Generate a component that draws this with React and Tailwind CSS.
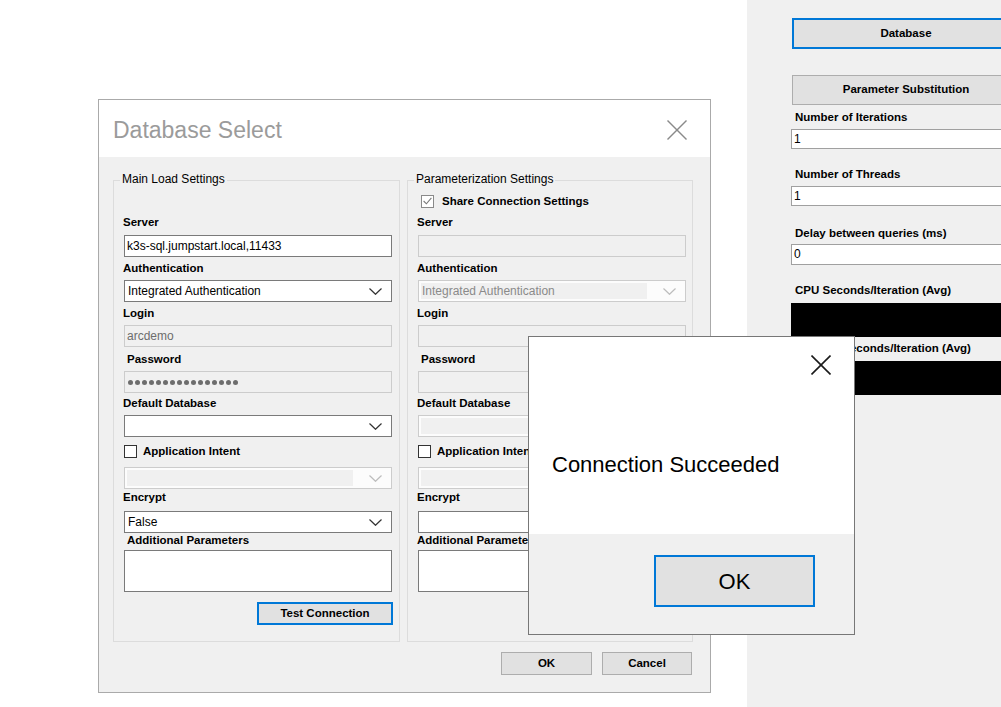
import React from 'react';

const Chevron = ({ light }) => (
  <svg width="13" height="7" viewBox="0 0 13 7">
    <polyline points="0.5,0.5 6.5,6.3 12.5,0.5" fill="none" stroke={light ? '#bdbdbd' : '#333'} strokeWidth="1.2" />
  </svg>
);

const XIcon = ({ size, color, width }) => (
  <svg width={size} height={size} viewBox={`0 0 ${size} ${size}`}>
    <line x1="0.5" y1="0.5" x2={size - 0.5} y2={size - 0.5} stroke={color} strokeWidth={width} />
    <line x1={size - 0.5} y1="0.5" x2="0.5" y2={size - 0.5} stroke={color} strokeWidth={width} />
  </svg>
);

const Label = ({ children, indent, className = '' }) => (
  <div className={`${indent ? 'pl-[3px]' : '-ml-px'} h-[14px] leading-[14px] text-[11.5px] font-bold text-black whitespace-nowrap ${className}`}>
    {children}
  </div>
);

const TextBox = ({ value, disabled, className = '' }) => (
  <div
    className={
      disabled
        ? `h-[22px] border border-[#cccccc] bg-[#f0f0f0] px-[2px] text-[12px] leading-[20px] text-[#6d6d6d] ${className}`
        : `h-[22px] border border-[#7a7a7a] bg-white px-[2px] text-[12px] leading-[20px] text-black ${className}`
    }
  >
    {value}
  </div>
);

const Combo = ({ value, disabled, className = '' }) => (
  <div
    className={
      disabled
        ? `h-[22px] border border-[#cccccc] bg-[#fcfcfc] flex ${className}`
        : `h-[22px] border border-[#7a7a7a] bg-white flex ${className}`
    }
  >
    <div
      className={
        disabled
          ? 'flex-1 m-[2px] bg-[#f0f0f0] px-px text-[12px] leading-[16px] text-[#8a8a8a] whitespace-nowrap overflow-hidden'
          : 'flex-1 m-[2px] px-px text-[12px] leading-[16px] text-black whitespace-nowrap overflow-hidden'
      }
    >
      {value}
    </div>
    <div className="w-[36px] pl-[4px] flex items-center justify-center">
      <Chevron light={disabled} />
    </div>
  </div>
);

const Check = ({ checked, label, className = '' }) => (
  <div className={`flex items-center h-[14px] ${className}`}>
    <div
      className={
        checked
          ? 'w-[13px] h-[13px] border border-[#8a8a8a] bg-white flex items-center justify-center mr-[8px]'
          : 'w-[13px] h-[13px] border border-[#333333] bg-white mr-[6px]'
      }
    >
      {checked && (
        <svg width="9" height="8" viewBox="0 0 9 8">
          <polyline points="0.6,4 3.4,6.8 8.4,0.8" fill="none" stroke="#7a7a7a" strokeWidth="1.1" />
        </svg>
      )}
    </div>
    <span className="text-[11.5px] font-bold leading-[14px] whitespace-nowrap">{label}</span>
  </div>
);

const WinButton = ({ children, focused, className = '' }) => (
  <div
    className={
      focused
        ? `border-2 border-[#0078d7] bg-[#e1e1e1] flex items-center justify-center font-bold text-[11.5px] ${className}`
        : `border border-[#adadad] bg-[#e1e1e1] flex items-center justify-center font-bold text-[11.5px] ${className}`
    }
  >
    {children}
  </div>
);

const Dots = () => (
  <div className="h-[22px] border border-[#cccccc] bg-[#f0f0f0] flex items-center gap-[2px] pl-[3px]">
    {Array.from({ length: 16 }).map((_, i) => (
      <div key={i} className="w-[5px] h-[5px] rounded-full bg-[#6d6d6d]" />
    ))}
  </div>
);

const GroupBox = ({ title, children, className = '' }) => (
  <div className={`relative border border-[#dcdcdc] h-[462px] flex flex-col ${className}`}>
    <div className="absolute left-[6px] -top-[9px] px-[2px] bg-[#f0f0f0] text-[12px] leading-[14px] text-black whitespace-nowrap">
      {title}
    </div>
    {children}
  </div>
);

const MainFields = () => (
  <GroupBox title="Main Load Settings" className="w-[287px] pl-[10px] pr-[7px]">
    <Label className="mt-[34px]">Server</Label>
    <TextBox className="mt-[6px]" value="k3s-sql.jumpstart.local,11433" />
    <Label className="mt-[4px]">Authentication</Label>
    <Combo className="mt-[5px]" value="Integrated Authentication" />
    <Label className="mt-[4px]">Login</Label>
    <TextBox className="mt-[5px]" value="arcdemo" disabled />
    <Label className="mt-[5px]" indent>Password</Label>
    <div className="mt-[5px]">
      <Dots />
    </div>
    <Label className="mt-[3px]">Default Database</Label>
    <Combo className="mt-[5px]" value="" />
    <Check className="mt-[7px]" label="Application Intent" />
    <Combo className="mt-[9px]" value="" disabled />
    <Label className="mt-px">Encrypt</Label>
    <Combo className="mt-[7px]" value="False" />
    <Label className="mt-0" indent>Additional Parameters</Label>
    <div className="mt-[3px] h-[42px] border border-[#7a7a7a] bg-white" />
    <div className="mt-[10px] flex justify-end -mr-px">
      <WinButton focused className="w-[136px] h-[23px]">Test Connection</WinButton>
    </div>
  </GroupBox>
);

const ParamFields = () => (
  <GroupBox title="Parameterization Settings" className="w-[286px] pl-[10px] pr-[6px]">
    <Check className="mt-[13px] ml-[3px]" checked label="Share Connection Settings" />
    <Label className="mt-[7px]">Server</Label>
    <TextBox className="mt-[6px]" value="" disabled />
    <Label className="mt-[4px]">Authentication</Label>
    <Combo className="mt-[5px]" value="Integrated Authentication" disabled />
    <Label className="mt-[4px]">Login</Label>
    <TextBox className="mt-[5px]" value="" disabled />
    <Label className="mt-[5px]" indent>Password</Label>
    <TextBox className="mt-[5px]" value="" disabled />
    <Label className="mt-[3px]">Default Database</Label>
    <Combo className="mt-[5px]" value="" disabled />
    <Check className="mt-[7px]" label="Application Intent" />
    <Combo className="mt-[9px]" value="" disabled />
    <Label className="mt-px">Encrypt</Label>
    <Combo className="mt-[7px]" value="" />
    <Label className="mt-0">Additional Parameters</Label>
    <div className="mt-[3px] h-[42px] border border-[#7a7a7a] bg-white" />
  </GroupBox>
);

const SidePanel = () => (
  <div className="w-[254px] h-full bg-[#f0f0f0] overflow-hidden pl-[45px] pt-[18px] flex flex-col">
    <WinButton focused className="w-[228px] h-[31px] shrink-0">Database</WinButton>
    <WinButton className="w-[228px] h-[30px] mt-[26px] shrink-0">Parameter Substitution</WinButton>

    <div className="mt-[5px] pl-[3px] h-[14px] leading-[14px] text-[11.5px] font-bold whitespace-nowrap">Number of Iterations</div>
    <div className="mt-[5px] -ml-px w-[230px] h-[20px] border border-[#a0a0a0] bg-white px-[2px] text-[12px] leading-[18px]">1</div>

    <div className="mt-[18px] pl-[3px] h-[14px] leading-[14px] text-[11.5px] font-bold whitespace-nowrap">Number of Threads</div>
    <div className="mt-[5px] -ml-px w-[230px] h-[20px] border border-[#a0a0a0] bg-white px-[2px] text-[12px] leading-[18px]">1</div>

    <div className="mt-[20px] pl-[3px] h-[14px] leading-[14px] text-[11.5px] font-bold whitespace-nowrap">Delay between queries (ms)</div>
    <div className="mt-[4px] -ml-px w-[230px] h-[21px] border border-[#a0a0a0] bg-white px-[2px] text-[12px] leading-[19px]">0</div>

    <div className="mt-[18px] pl-[3px] h-[14px] leading-[14px] text-[11.5px] font-bold whitespace-nowrap">CPU Seconds/Iteration (Avg)</div>
    <div className="mt-[6px] -ml-px w-[230px] h-[34px] bg-black shrink-0" />

    <div className="mt-[4px] pl-[3px] h-[14px] leading-[14px] text-[11.5px] font-bold whitespace-nowrap">Elapsed Seconds/Iteration (Avg)</div>
    <div className="mt-[6px] -ml-px w-[230px] h-[34px] bg-black shrink-0" />
  </div>
);

const DatabaseDialog = () => (
  <div className="absolute left-[98px] top-[99px] w-[613px] h-[594px] border border-[#aaaaaa] bg-[#f0f0f0] flex flex-col">
    <div className="h-[57px] bg-white flex items-center justify-between pl-[14px] pr-[23px] pt-[2px]">
      <span className="text-[23px] text-[#9b9b9b] leading-[28px]">Database Select</span>
      <XIcon size={20} color="#8a8a8a" width={1.4} />
    </div>
    <div className="flex gap-[7px] pl-[14px] pt-[23px]">
      <MainFields />
      <ParamFields />
    </div>
    <div className="flex justify-end gap-[10px] pr-[18px] mt-[10px]">
      <WinButton className="w-[91px] h-[23px]">OK</WinButton>
      <WinButton className="w-[90px] h-[23px]">Cancel</WinButton>
    </div>
  </div>
);

const MessageBox = () => (
  <div className="absolute left-[528px] top-[336px] w-[327px] h-[299px] border border-[#777777] bg-[#f0f0f0] flex flex-col">
    <div className="h-[197px] bg-white flex flex-col">
      <div className="flex justify-end pt-[18px] pr-[23px]">
        <XIcon size={20} color="#1a1a1a" width={1.6} />
      </div>
      <div className="mt-[77px] pl-[23px] text-[22px] leading-[26px] text-black whitespace-nowrap">
        Connection Succeeded
      </div>
    </div>
    <div className="flex justify-end pt-[21px] pr-[39px]">
      <div className="w-[161px] h-[52px] border-2 border-[#0078d7] bg-[#e1e1e1] flex items-center justify-center text-[22px] text-black">
        OK
      </div>
    </div>
  </div>
);

export default function App() {
  return (
    <div className="relative w-[1001px] h-[707px] overflow-hidden flex font-['Liberation_Sans',Arial,sans-serif] text-black">
      <div className="flex-1 bg-white" />
      <SidePanel />
      <DatabaseDialog />
      <MessageBox />
    </div>
  );
}
